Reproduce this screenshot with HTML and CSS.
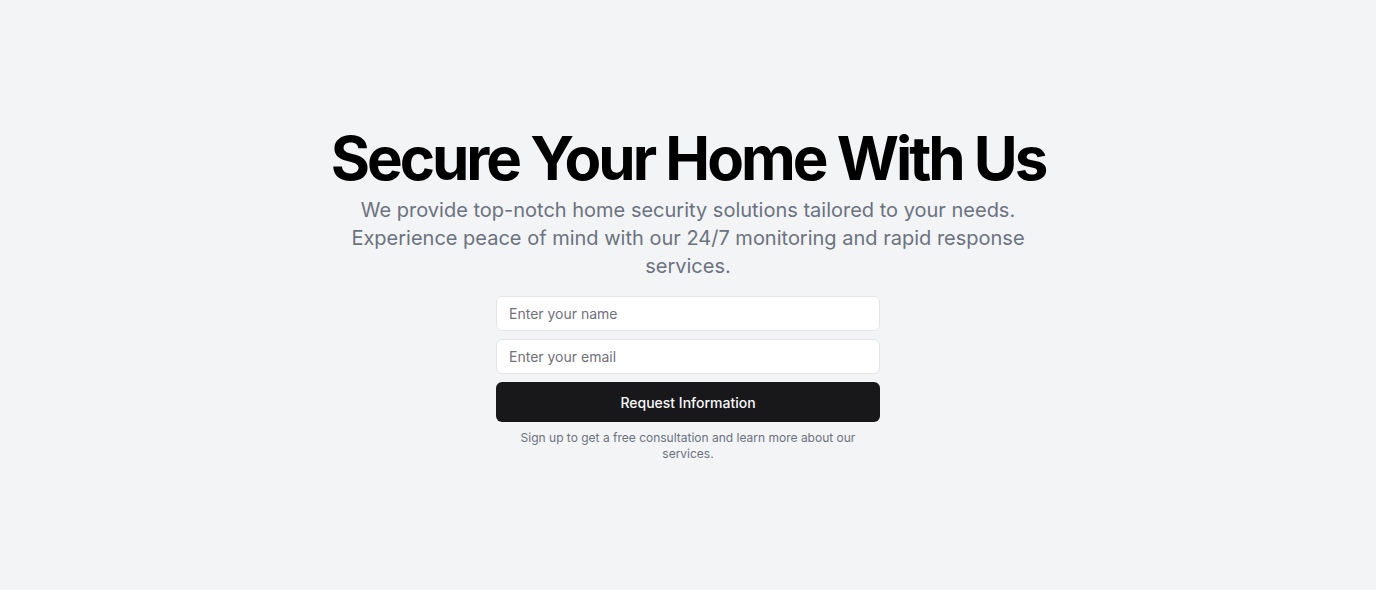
FILE: index.html
```html
<!DOCTYPE html>
<html lang="en">
<head>
<meta charset="utf-8">
<title>Secure Your Home With Us</title>
<link rel="stylesheet" href="styles.css">
</head>
<body>
<section class="hero">
  <div class="container">
    <div class="intro">
      <h1 class="title">Secure Your Home With Us</h1>
      <p class="lead">We provide top-notch home security solutions tailored to your needs. Experience peace of mind with our 24/7 monitoring and rapid response services.</p>
    </div>
    <div class="signup">
      <form class="form">
        <input class="field" type="text" placeholder="Enter your name">
        <input class="field" type="email" placeholder="Enter your email">
        <button class="btn" type="submit">Request Information</button>
      </form>
      <p class="note">Sign up to get a free consultation and learn more about our services.</p>
    </div>
  </div>
</section>
</body>
</html>
```

FILE: styles.css
```css
* { box-sizing: border-box; }
html, body { margin: 0; padding: 0; }
body {
  background: #f3f4f6;
  font-family: Inter, "Noto Sans", sans-serif;
  color: #09090b;
  min-height: 590px;
}
.hero {
  width: 100%;
  padding: 128px 0;
}
.container {
  display: flex;
  flex-direction: column;
  align-items: center;
  gap: 16px;
  padding: 0 24px;
  text-align: center;
}
.intro {
  display: flex;
  flex-direction: column;
  align-items: center;
  gap: 8px;
}
.title {
  margin: 0;
  font-size: 60px;
  line-height: 1;
  font-weight: 700;
  letter-spacing: -3px;
  color: #000;
}
.lead {
  margin: 0;
  max-width: 700px;
  font-size: 20px;
  line-height: 28px;
  color: #6b7280;
}
.signup {
  width: 100%;
  max-width: 384px;
  display: flex;
  flex-direction: column;
  gap: 8px;
}
.form {
  display: flex;
  flex-direction: column;
  gap: 8px;
}
.field {
  height: 35px;
  width: 100%;
  border: 1px solid #e4e4e7;
  border-radius: 6px;
  background: #fff;
  padding: 0 12px;
  font-family: inherit;
  font-size: 14px;
  color: #09090b;
}
.field::placeholder { color: #71717a; }
.btn {
  height: 40px;
  width: 100%;
  border: 0;
  border-radius: 6px;
  background: #18181b;
  color: #fafafa;
  font-family: inherit;
  font-size: 14px;
  font-weight: 500;
}
.note {
  margin: 0;
  font-size: 12px;
  line-height: 16px;
  color: #6b7280;
}
```
